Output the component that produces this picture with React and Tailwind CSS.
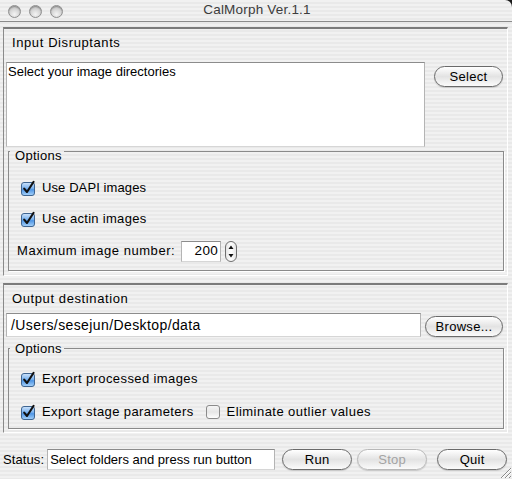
import React from "react";

const stripe =
  "bg-[repeating-linear-gradient(180deg,#f1f1f1_0px,#f1f1f1_2px,#e9e9e9_2px,#e9e9e9_4px)] bg-fixed";

function Light() {
  return (
    <div className="w-[13px] h-[13px] rounded-full border border-[#8e8e8e] bg-[radial-gradient(circle_at_50%_75%,#f4f4f4_0%,#d2d2d2_55%,#a9a9a9_100%)] shadow-[inset_0_1px_1px_rgba(0,0,0,0.25)]" />
  );
}

function Check({ checked }) {
  if (!checked) {
    return (
      <svg width="14" height="14" viewBox="0 0 14 14" className="shrink-0">
        <defs>
          <linearGradient id="ug" x1="0" y1="0" x2="0" y2="1">
            <stop offset="0" stopColor="#f6f6f6" />
            <stop offset="0.5" stopColor="#e6e6e6" />
            <stop offset="1" stopColor="#ffffff" />
          </linearGradient>
        </defs>
        <rect x="0.5" y="0.5" width="13" height="13" rx="2.5" fill="url(#ug)" stroke="#8a8a8a" />
      </svg>
    );
  }
  return (
    <svg width="15" height="15" viewBox="0 0 15 15" className="shrink-0 overflow-visible">
      <defs>
        <linearGradient id="cg" x1="0" y1="0" x2="0" y2="1">
          <stop offset="0" stopColor="#cfe4fb" />
          <stop offset="0.45" stopColor="#79b2ef" />
          <stop offset="0.55" stopColor="#4f95e4" />
          <stop offset="1" stopColor="#a9d4fb" />
        </linearGradient>
      </defs>
      <rect x="0.5" y="1.5" width="13" height="13" rx="2.5" fill="url(#cg)" stroke="#3f6591" />
      <path d="M3.2 7.6 L6 11 L12.6 0.8" fill="none" stroke="#111" strokeWidth="2.1" strokeLinecap="round" strokeLinejoin="round" />
    </svg>
  );
}

function AquaButton({ children, className = "", disabled = false }) {
  return (
    <div
      className={
        "h-[21px] rounded-full border flex items-center justify-center text-[13px] leading-none tracking-[0.3px] bg-linear-to-b from-[#ffffff] via-[#e3e3e3] to-[#fbfbfb] shadow-[0_1px_1px_rgba(0,0,0,0.15)] " +
        (disabled ? "border-[#b8b8b8] text-[#a3a3a3]" : "border-[#6a6a6a] text-black") +
        " " +
        className
      }
    >
      {children}
    </div>
  );
}

function Group({ children, className = "", labelTop }) {
  return (
    <div
      className={
        "relative border border-[#8a8a8a] shadow-[1px_1px_0_#ffffff] " + className
      }
    >
      <div className={"absolute left-[1px] pl-[5px] pr-[2px] leading-[16px] tracking-[0.3px] " + stripe + " " + labelTop}>
        Options
      </div>
      {children}
    </div>
  );
}

export default function App() {
  return (
    <div
      className={"relative w-[512px] h-[479px] overflow-hidden text-[13px] text-black " + stripe}
      style={{ fontFamily: '"Liberation Sans", Arial, sans-serif' }}
    >
      <div className="absolute top-0 right-0 w-[10px] h-[10px] bg-[#1a1a1a]" />
      {/* title bar */}
      <div className={"relative h-[22px] border-b border-[#8c8c8c] rounded-tr-[7px] flex items-center " + stripe}>
        <div className="flex items-center gap-[8px] pl-[8px] pt-[1px]">
          <Light />
          <Light />
          <Light />
        </div>
        <div className="absolute inset-0 flex items-center justify-center text-[13.5px] text-[#3c3c3c] pb-[1px] pl-[2px] tracking-[0.2px]">
          CalMorph Ver.1.1
        </div>
      </div>

      {/* panel 1 */}
      <div className="ml-[3px] mr-[4px] mt-[5px] border-t-2 border-l border-t-[#7c7c7c] border-l-[#8a8a8a] border-r border-b border-r-white border-b-white pl-[2px] pr-[3px] pb-[4px]">
        <div className="h-[33px] pt-[6px] pl-[6px] leading-[16px] tracking-[0.6px]">Input Disruptants</div>
        <div className="flex">
          <div className="w-[419px] h-[85px] bg-white border-t border-t-[#8c8c8c] border-l border-l-[#b4b4b4] border-r border-r-[#b4b4b4] border-b border-b-[#d6d6d6] px-[1px] pt-[1px] leading-[16px]">
            Select your image directories
          </div>
          <AquaButton className="ml-[9px] mt-[4px] w-[69px]">Select</AquaButton>
        </div>
        <Group className="mt-[4px] ml-[2px] pt-[26px] pb-[8px]" labelTop="top-[-4px]">
          <div className="flex items-center h-[20px] pl-[12px] gap-[6px]">
            <Check checked />
            <span className="tracking-[0.1px]">Use DAPI images</span>
          </div>
          <div className="flex items-center h-[20px] pl-[12px] gap-[6px] mt-[11px]">
            <Check checked />
            <span className="tracking-[0.3px]">Use actin images</span>
          </div>
          <div className="flex items-center h-[22px] pl-[8px] mt-[11px]">
            <span className="tracking-[0.55px]">Maximum image number:</span>
            <div className="ml-[6px] w-[40px] h-[21px] bg-white border-t border-t-[#8c8c8c] border-x border-x-[#b4b4b4] border-b border-b-[#d6d6d6] flex items-center justify-end pr-[2px] text-[13.5px] tracking-[0.4px]">
              200
            </div>
            <svg width="14" height="21" viewBox="0 0 14 21" className="ml-[3px]">
              <defs>
                <linearGradient id="sg" x1="0" y1="0" x2="1" y2="0">
                  <stop offset="0" stopColor="#e2e2e2" />
                  <stop offset="0.5" stopColor="#ffffff" />
                  <stop offset="1" stopColor="#e2e2e2" />
                </linearGradient>
              </defs>
              <rect x="1.5" y="0.5" width="11" height="20" rx="5.5" fill="url(#sg)" stroke="#6f6f6f" />
              <path d="M4.5 8 L7 4.5 L9.5 8 Z" fill="#111" />
              <path d="M4.5 13 L7 16.5 L9.5 13 Z" fill="#111" />
            </svg>
          </div>
        </Group>
      </div>

      {/* panel 2 */}
      <div className="ml-[3px] mr-[4px] mt-[7px] border-t-2 border-l border-t-[#7c7c7c] border-l-[#8a8a8a] border-r border-b border-r-white border-b-white pl-[2px] pr-[3px] pb-[3px]">
        <div className="h-[28px] pt-[6px] pl-[6px] leading-[16px] tracking-[0.6px]">Output destination</div>
        <div className="flex">
          <div className="w-[415px] h-[24px] bg-white border-t border-t-[#8c8c8c] border-x border-x-[#b4b4b4] border-b border-b-[#d6d6d6] flex items-center pl-[4px] text-[14px] tracking-[0.4px]">
            /Users/sesejun/Desktop/data
          </div>
          <AquaButton className="ml-[4px] mt-[3px] w-[78px]">Browse...</AquaButton>
        </div>
        <Group className="mt-[11px] ml-[2px] pt-[20px] pb-[6px]" labelTop="top-[-8px]">
          <div className="flex items-center h-[20px] pl-[12px] gap-[6px]">
            <Check checked />
            <span className="tracking-[0.4px]">Export processed images</span>
          </div>
          <div className="flex items-center h-[20px] pl-[12px] gap-[6px] mt-[13px]">
            <Check checked />
            <span className="tracking-[0.4px]">Export stage parameters</span>
            <span className="ml-[6px] flex items-center gap-[7px]">
              <Check checked={false} />
              <span className="tracking-[0.45px]">Eliminate outlier values</span>
            </span>
          </div>
        </Group>
      </div>

      {/* status row */}
      <div className="flex items-center mt-[16px] pl-[3px] h-[21px]">
        <span className="tracking-[0.1px]">Status:</span>
        <div className="ml-[3px] w-[228px] h-[21px] bg-white border-t border-t-[#8c8c8c] border-x border-x-[#b4b4b4] border-b border-b-[#d6d6d6] flex items-center pl-[2px] whitespace-nowrap overflow-hidden">
          Select folders and press run button
        </div>
        <AquaButton className="ml-[7px] w-[70px]">Run</AquaButton>
        <AquaButton className="ml-[5px] w-[70px]" disabled>Stop</AquaButton>
        <AquaButton className="ml-[10px] w-[70px]">Quit</AquaButton>
      </div>

      {/* resize grip */}
      <svg width="14" height="14" viewBox="0 0 14 14" className="absolute right-0 bottom-0">
        <path d="M13 3 L3 13 M13 7 L7 13 M13 11 L11 13" stroke="#8a8a8a" strokeWidth="1" />
        <path d="M13 4 L4 13 M13 8 L8 13" stroke="#ffffff" strokeWidth="1" />
      </svg>
    </div>
  );
}
